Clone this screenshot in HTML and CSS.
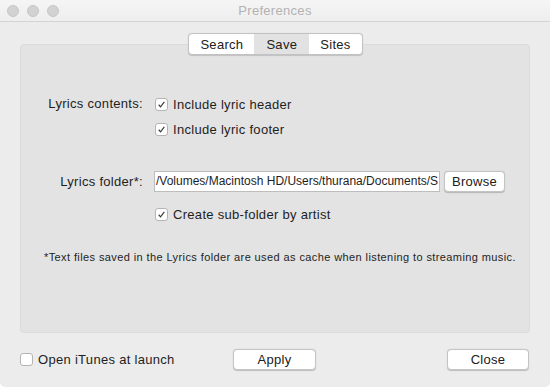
FILE: index.html
```html
<!DOCTYPE html>
<html lang="en">
<head>
<meta charset="UTF-8">
<meta name="viewport" content="width=device-width, initial-scale=1.0">
<title>Preferences</title>
<link rel="stylesheet" href="styles.css">
</head>
<body>
<div class="window">
    <div class="titlebar">
        <div class="lights">
            <span class="light"></span>
            <span class="light"></span>
            <span class="light"></span>
        </div>
        <div class="title">Preferences</div>
    </div>

    <div class="main">
        <div class="tabs">
            <span class="tab">Search</span>
            <span class="tab selected">Save</span>
            <span class="tab">Sites</span>
        </div>

        <div class="panel">
            <div class="form">
                <div class="label">Lyrics contents:</div>
                <label class="check"><span class="box on"><svg viewBox="0 0 13 13"><path d="M3.2 6.8 L5.4 9.2 L9.8 3.4" /></svg></span>Include lyric header</label>

                <div class="label"></div>
                <label class="check"><span class="box on"><svg viewBox="0 0 13 13"><path d="M3.2 6.8 L5.4 9.2 L9.8 3.4" /></svg></span>Include lyric footer</label>

                <div class="label folder-label">Lyrics folder*:</div>
                <div class="folder-row">
                    <div class="field">/Volumes/Macintosh HD/Users/thurana/Documents/S</div>
                    <button class="btn browse">Browse</button>
                </div>

                <div class="label sub-label"></div>
                <label class="check sub-check"><span class="box on"><svg viewBox="0 0 13 13"><path d="M3.2 6.8 L5.4 9.2 L9.8 3.4" /></svg></span>Create sub-folder by artist</label>
            </div>

            <p class="note">*Text files saved in the Lyrics folder are used as cache when listening to streaming music.</p>
        </div>

        <div class="footer">
            <label class="check launch"><span class="box"></span>Open iTunes at launch</label>
            <button class="btn apply">Apply</button>
            <button class="btn close">Close</button>
        </div>
    </div>
</div>
</body>
</html>
```

FILE: styles.css
```css
body {
    margin: 0;
    background: #ffffff;
    font-family: "Liberation Sans", Arial, sans-serif;
    font-size: 13px;
    letter-spacing: 0.3px;
    color: #1e1e1e;
}

.window {
    width: 550px;
    height: 387px;
    background: #ececec;
    border-radius: 0 0 5px 5px;
    overflow: hidden;
    display: flex;
    flex-direction: column;
}

.titlebar {
    height: 22px;
    box-sizing: border-box;
    background: linear-gradient(#f5f5f5, #eeeeee);
    border-bottom: 1px solid #d4d4d4;
    display: flex;
    align-items: center;
    position: relative;
}

.lights {
    display: flex;
    gap: 8px;
    padding-left: 7px;
}

.light {
    width: 12px;
    height: 12px;
    box-sizing: border-box;
    border-radius: 50%;
    background: #d2d2d2;
    border: 0.5px solid #c6c6c6;
}

.title {
    position: absolute;
    left: 0;
    right: 0;
    text-align: center;
    color: #b2b2b2;
    font-size: 13px;
}

.main {
    flex-grow: 1;
    padding: 11px 20px 0 20px;
    display: flex;
    flex-direction: column;
}

.tabs {
    align-self: center;
    display: flex;
    height: 20px;
    margin-left: 1px;
    margin-bottom: -11px;
    background: #ffffff;
    border: 0.5px solid #c2c2c2;
    border-radius: 4px;
    box-shadow: 0 0.5px 1px rgba(0, 0, 0, 0.15);
    overflow: hidden;
    position: relative;
    z-index: 1;
}

.tab {
    display: flex;
    align-items: center;
    padding: 0 11px;
    color: #202020;
}

.tab.selected {
    background: #e2e2e2;
    padding: 0 12px;
}

.panel {
    height: 289px;
    background: #e3e3e3;
    border: 1px solid #dbdbdb;
    border-radius: 4px;
    box-sizing: border-box;
    padding-top: 49px;
}

.form {
    display: grid;
    grid-template-columns: 122px auto;
    column-gap: 12px;
    row-gap: 5px;
    align-items: center;
}

.label {
    text-align: right;
    height: 20px;
    line-height: 20px;
}

.folder-label {
    margin-top: 27px;
}

.sub-label,
.sub-check {
    margin-top: 7px;
}

.check {
    display: flex;
    align-items: center;
    height: 20px;
    gap: 5px;
}

.box {
    width: 13px;
    height: 13px;
    box-sizing: border-box;
    background: #ffffff;
    border: 1px solid #b4b4b4;
    border-radius: 3px;
    display: flex;
}

.box svg {
    width: 11px;
    height: 11px;
    fill: none;
    stroke: #3a3a3a;
    stroke-width: 1.4;
}

.folder-row {
    display: flex;
    align-items: center;
    gap: 4px;
    margin-top: 27px;
    margin-left: -1px;
}

.field {
    width: 286px;
    height: 21px;
    box-sizing: border-box;
    background: #ffffff;
    border: 1px solid #bdbdbd;
    padding: 0 1px;
    line-height: 19px;
    font-size: 12px;
    letter-spacing: 0;
    white-space: nowrap;
    overflow: hidden;
}

.btn {
    font-family: inherit;
    font-size: 13px;
    letter-spacing: 0.3px;
    color: #202020;
    height: 21px;
    background: #ffffff;
    border: 0.5px solid #c4c4c4;
    border-radius: 4px;
    box-shadow: 0 0.5px 1px rgba(0, 0, 0, 0.2);
    padding: 0;
}

.browse {
    width: 61px;
}

.note {
    margin: 27px 0 0 23px;
    font-size: 11px;
    letter-spacing: 0.4px;
}

.footer {
    display: flex;
    align-items: center;
    height: 52px;
    padding-right: 1px;
}

.launch {
    width: 213px;
}

.apply {
    width: 83px;
}

.close {
    width: 82px;
    margin-left: auto;
}
```
